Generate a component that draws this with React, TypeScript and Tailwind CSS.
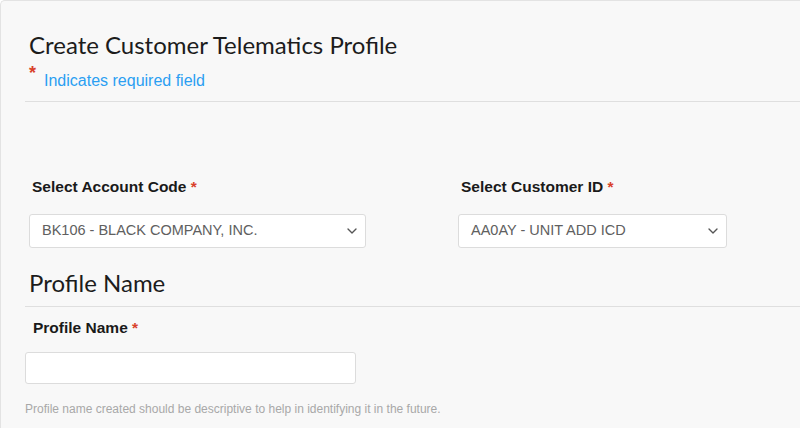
import { ChevronDown } from "lucide-react";

const heading = { fontFamily: "Lato, 'Noto Sans', sans-serif" };
const body = { fontFamily: "'Liberation Sans', Arial, sans-serif" };

function RequiredLabel({ text }: { text: string }) {
    return (
        <div className="text-[15.5px] font-bold text-[#1a1a1a] leading-[18px]" style={body}>
            {text} <span className="text-[#d9412b]">*</span>
        </div>
    );
}

function SelectBox({ value, width }: { value: string; width: string }) {
    return (
        <div
            className={`${width} h-[34px] bg-white border border-[#dcdcdc] rounded-[3px] flex items-center justify-between pl-[12px] pr-[5px]`}
        >
            <span className="text-[14.5px] text-[#606060]" style={body}>
                {value}
            </span>
            <ChevronDown className="w-[16px] h-[16px] text-[#555]" strokeWidth={2} />
        </div>
    );
}

export default function App() {
    return (
        <div className="w-[800px] h-[428px] overflow-hidden bg-white">
            <div className="h-full border-t border-l border-[#e3e3e3] rounded-tl-[5px] bg-[#f8f8f8] pl-[24px]">
                {/* Header */}
                <h1 className="ml-[4px] mt-[29px] text-[24px] leading-[30px] text-[#1c1c1c]" style={heading}>
                    Create Customer Telematics Profile
                </h1>
                <div className="flex items-start ml-[4px] mt-[5px]">
                    <span className="text-[#d9412b] text-[18px] leading-[16px] font-bold" style={body}>*</span>
                    <span className="ml-[8px] mt-[7px] text-[16px] leading-[18px] text-[#2b9ff2]" style={body}>
                        Indicates required field
                    </span>
                </div>
                <div className="mt-[11px] border-t border-[#dfdfdf]" />

                {/* Account / Customer selects */}
                <div className="flex pl-[4px] mt-[76px]">
                    <div className="w-[337px]">
                        <div className="ml-[3px]">
                            <RequiredLabel text="Select Account Code" />
                        </div>
                        <div className="mt-[18px]">
                            <SelectBox value="BK106 - BLACK COMPANY, INC." width="w-[337px]" />
                        </div>
                    </div>
                    <div className="ml-[92px] w-[269px]">
                        <div className="ml-[3px]">
                            <RequiredLabel text="Select Customer ID" />
                        </div>
                        <div className="mt-[18px]">
                            <SelectBox value="AA0AY - UNIT ADD ICD" width="w-[269px]" />
                        </div>
                    </div>
                </div>

                {/* Profile Name section */}
                <h2 className="ml-[4px] mt-[20px] text-[24px] leading-[30px] text-[#1c1c1c]" style={heading}>
                    Profile Name
                </h2>
                <div className="mt-[8px] border-t border-[#dfdfdf]" />
                <div className="ml-[8px] mt-[12px]">
                    <RequiredLabel text="Profile Name" />
                </div>
                <input
                    className="mt-[15px] block w-[331px] h-[32px] bg-white border border-[#dcdcdc] rounded-[3px] outline-none"
                    style={body}
                />
                <p className="mt-[18px] text-[12px] leading-[14px] text-[#a8a8a8]" style={body}>
                    Profile name created should be descriptive to help in identifying it in the future.
                </p>
            </div>
        </div>
    );
}
